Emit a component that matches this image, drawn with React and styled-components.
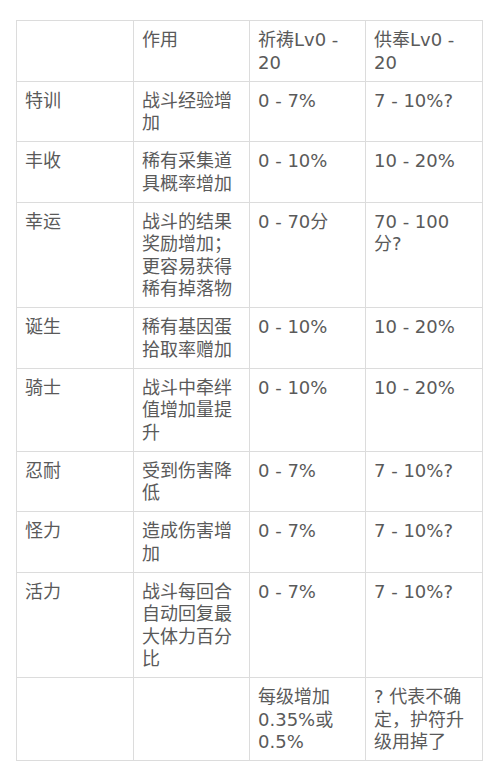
import React from "react";
import styled, { createGlobalStyle } from "styled-components";

const Global = createGlobalStyle`
  html, body { margin: 0; padding: 0; background: #fff; }
  body { font-family: "DejaVu Sans", "Noto Sans CJK SC", sans-serif; }
`;

const Page = styled.div`
  padding: 20px 16px;
`;

const Table = styled.table`
  width: 466px;
  table-layout: fixed;
  border-collapse: collapse;
  font-family: "DejaVu Sans", "Noto Sans CJK SC", sans-serif;
  font-size: 18px;
  line-height: 22.5px;
  color: #5a5a5a;
`;

const Col = styled.col`
  width: ${(p) => p.$w}px;
`;

const Cell = styled.td`
  border: 1px solid #dcdcdc;
  padding: 8px 8px 6.5px 8px;
  vertical-align: top;
  text-align: left;
  font-weight: 400;
  word-break: break-word;
`;

const widths = [117, 116, 116, 117];

const rows = [
  ["", "作用", "祈祷Lv0 - 20", "供奉Lv0 - 20"],
  ["特训", "战斗经验增加", "0 - 7%", "7 - 10%?"],
  ["丰收", "稀有采集道具概率增加", "0 - 10%", "10 - 20%"],
  ["幸运", "战斗的结果奖励增加；更容易获得稀有掉落物", "0 - 70分", "70 - 100分?"],
  ["诞生", "稀有基因蛋拾取率赠加", "0 - 10%", "10 - 20%"],
  ["骑士", "战斗中牵绊值增加量提升", "0 - 10%", "10 - 20%"],
  ["忍耐", "受到伤害降低", "0 - 7%", "7 - 10%?"],
  ["怪力", "造成伤害增加", "0 - 7%", "7 - 10%?"],
  ["活力", "战斗每回合自动回复最大体力百分比", "0 - 7%", "7 - 10%?"],
  ["", "", "每级增加0.35%或0.5%", "? 代表不确定，护符升级用掉了"],
];

export default function App() {
  return (
    <Page>
      <Global />
      <Table>
        <colgroup>
          {widths.map((w, i) => (
            <Col key={i} $w={w} />
          ))}
        </colgroup>
        <tbody>
          {rows.map((r, i) => (
            <tr key={i}>
              {r.map((c, j) => (
                <Cell key={j}>{c}</Cell>
              ))}
            </tr>
          ))}
        </tbody>
      </Table>
    </Page>
  );
}
